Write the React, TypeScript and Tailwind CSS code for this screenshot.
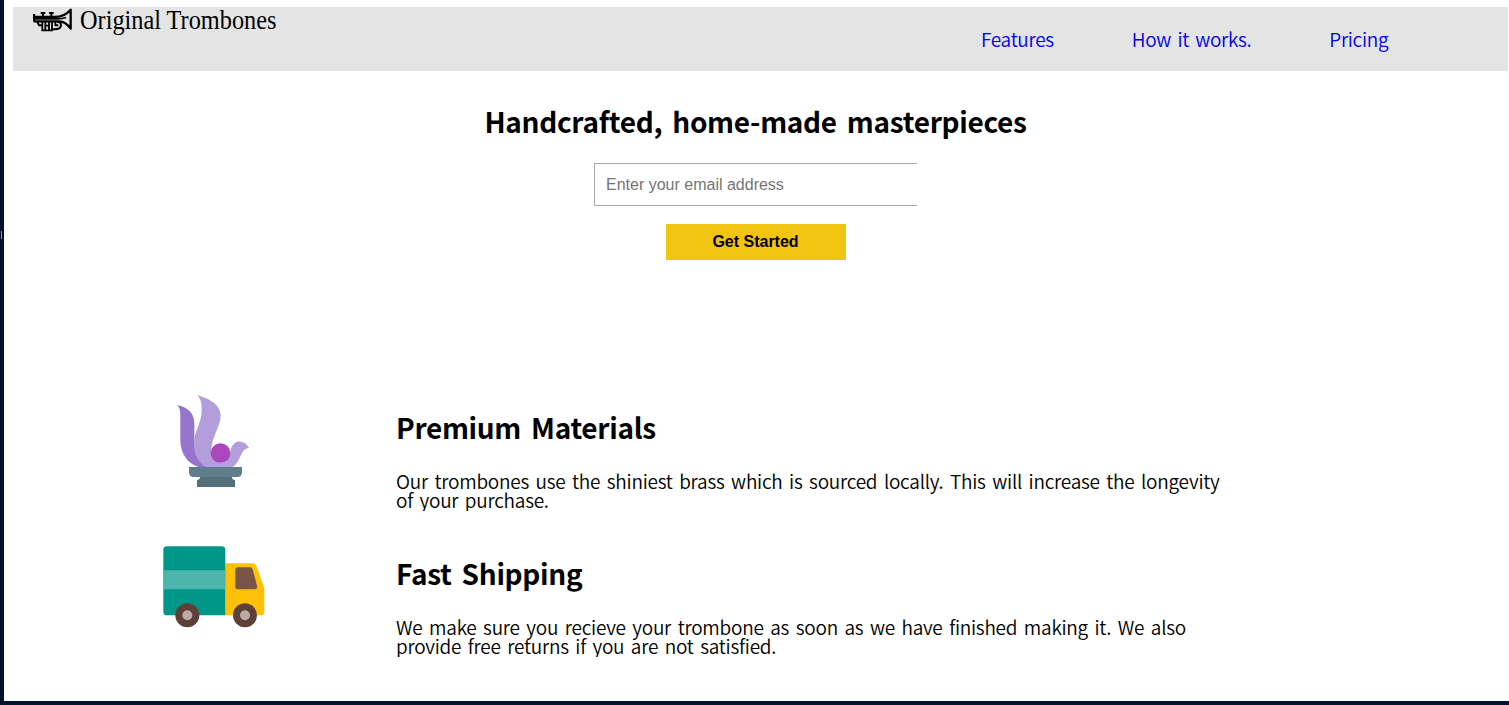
import React from "react";

function TrumpetIcon() {
  return (
    <svg width="39" height="24" viewBox="99 26 117 72" fill="none" stroke="#000" strokeWidth="7" className="shrink-0">
      <path d="M102 44v22M101 53h62c20 0 34-4 49-22v57c-12-17-22-22-34-22H101" strokeLinejoin="round" />
      <path d="M101 58.500h70c12 0 20-1 27-4" strokeWidth="5" />
      <path d="M122 41h14M147 41h14M129 42v10M154 42v10M112 67l5 11h10" strokeWidth="6" />
      <path d="M127 66v27h9v-27M147 66v27h9v-27M136 79h9M136 93h11M166 66v14" strokeWidth="5.500" />
      <path d="M154 90h9c14 0 20-6 20-13s-4-10-12-10M165 78h10" strokeWidth="6" />
    </svg>
  );
}

function FlameIcon() {
  return (
    <svg width="72" height="92" viewBox="81 30 216 276">
      <path d="M81 61c34 5 52 25 52 55v62l40 69h-26c-35-12-56-42-56-82V92c0-16-2-25-10-31z" fill="#9575cd" />
      <path d="M141 30c38 12 71 28 71 62 0 32-28 63-28 104 0 22 16 37 30 37 21 0 25-24 29-41 7-29 39-30 54-4-28 4-22 42-51 59h-76c-27-15-38-41-38-68 0-43 23-62 23-103 0-20-2-35-14-46z" fill="#b39ddb" />
      <circle cx="211.500" cy="204" r="29.500" fill="#ab47bc" />
      <path d="M151 276h94q2 9 10 9v21H141v-21q8 0 10-9z" fill="#546e7a" />
      <path d="M117 246h159v16q0 14-14 14H131q-14 0-14-14z" fill="#607d8b" />
    </svg>
  );
}

function TruckIcon() {
  return (
    <svg width="102" height="82" viewBox="38 32 306 246">
      <path d="M225 84h82q8 0 11 8l22 61q2 5 2 10v66q0 11-11 11H225z" fill="#ffc107" />
      <path d="M50 33h164q11 0 11 11v196H50q-11 0-11-11V44q0-11 11-11z" fill="#009688" />
      <path d="M39 105h186v57H39z" fill="#4db6ac" />
      <path d="M263 96h37q5 0 7 6l13 49q3 11-8 11h-49q-8 0-8-8v-50q0-8 8-8z" fill="#795548" />
      <circle cx="111" cy="240" r="36" fill="#5d4037" />
      <circle cx="284" cy="240" r="36" fill="#5d4037" />
      <circle cx="111" cy="240" r="15" fill="#bcaaa4" />
      <circle cx="284" cy="240" r="15" fill="#bcaaa4" />
    </svg>
  );
}

const heading = "text-[28px] leading-[38px] font-semibold tracking-[-0.3px] [word-spacing:4px] whitespace-nowrap";

function Feature({ icon, title, lines }: { icon: React.ReactNode; title: string; lines: string[] }) {
  return (
    <section className="flex h-[146px]">
      <div className="flex w-[392px] shrink-0 justify-center pr-[16px]">{icon}</div>
      <div className="pt-[13px]">
        <h2 className={heading}>{title}</h2>
        <p className="mt-[25px] h-[40px] w-[830px] overflow-hidden text-[19px] leading-[19px] font-[350] tracking-[-0.25px] [word-spacing:2.6px] whitespace-nowrap">
          {lines.map((line) => (
            <span key={line} className="block">{line}</span>
          ))}
        </p>
      </div>
    </section>
  );
}

export default function App() {
  return (
    <div className="h-[705px] w-[1509px] overflow-hidden border-b-4 border-l-4 border-[#00112b] bg-white pt-[7px] font-['Noto_Sans_CJK_KR','Noto_Sans',sans-serif] text-black">
      <div className="absolute top-[231px] left-px h-[8px] w-px bg-[#b08a5a]" />
      <header className="ml-[9px] mr-px flex h-[64px] bg-[#e4e4e4] pl-[20px]">
        <div className="flex h-[27px] w-[948px] items-start pt-px">
          <TrumpetIcon />
          <span className="ml-[8px] inline-block origin-left scale-x-[0.9] font-['Liberation_Serif',serif] text-[27px] leading-[24px] whitespace-nowrap">
            Original Trombones
          </span>
        </div>
        <nav className="flex items-center gap-[78px] text-[19px] font-[350] tracking-[-0.3px] text-[#0000ee] [word-spacing:2.4px] whitespace-nowrap">
          <a href="#features">Features</a>
          <a href="#how">How it works.</a>
          <a href="#pricing">Pricing</a>
        </nav>
      </header>

      <main>
        <section className="ml-[9px] mr-[11px] flex h-[318px] flex-col items-center pt-[31px]">
          <h1 className={heading}>Handcrafted, home-made masterpieces</h1>
          <input
            type="email"
            placeholder="Enter your email address"
            className="mt-[23px] h-[43px] w-[323px] border border-r-0 border-[#a9a9a9] pl-[11px] font-['Liberation_Sans',sans-serif] text-[16px] outline-none placeholder:text-[#757575]"
          />
          <button className="mt-[18px] h-[36px] w-[180px] bg-[#f1c40f] font-['Liberation_Sans',sans-serif] text-[16px] font-bold">
            Get Started
          </button>
        </section>

        <div className="pt-[6px]">
          <Feature
            icon={<div className="pl-[42px]"><FlameIcon /></div>}
            title="Premium Materials"
            lines={["Our trombones use the shiniest brass which is sourced locally. This will increase the longevity", "of your purchase."]}
          />
          <Feature
            icon={<div className="pl-[43px] pt-[5px]"><TruckIcon /></div>}
            title="Fast Shipping"
            lines={["We make sure you recieve your trombone as soon as we have finished making it. We also", "provide free returns if you are not satisfied."]}
          />
        </div>
      </main>
    </div>
  );
}
